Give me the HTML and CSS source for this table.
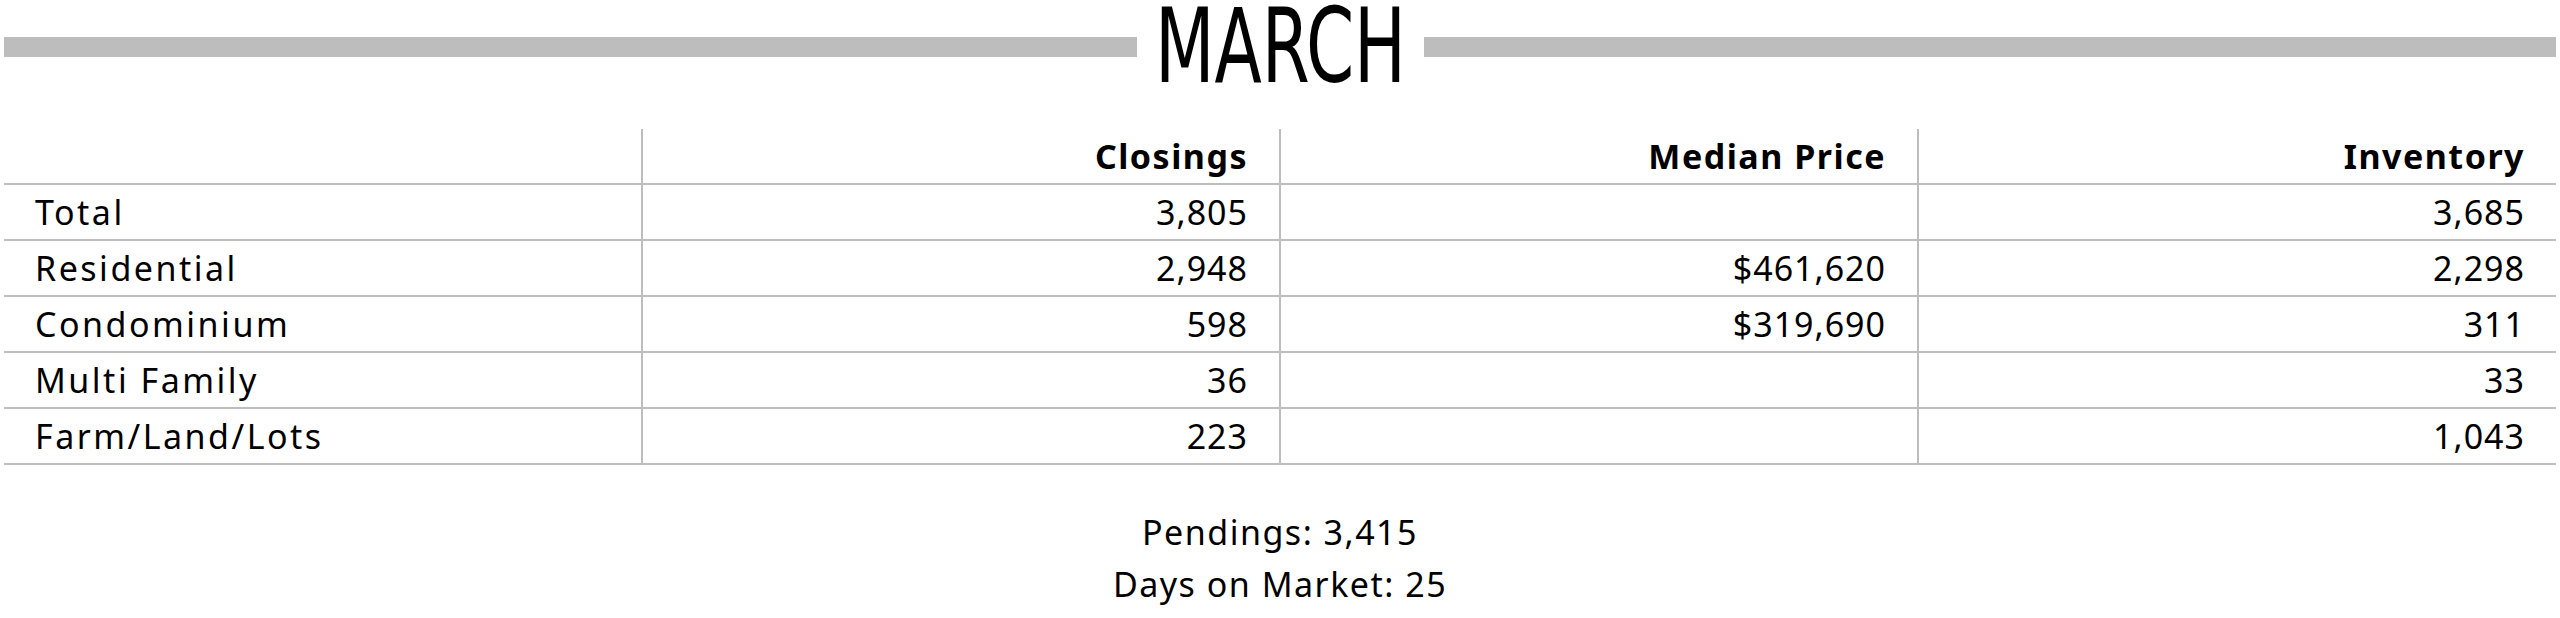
FILE: index.html
```html
<!DOCTYPE html>
<html lang="en">
<head>
<meta charset="utf-8">
<title>March</title>
<link rel="stylesheet" href="styles.css">
</head>
<body>
<div class="report">
  <div class="title-row">
    <div class="bar"></div>
    <h1 class="title">MARCH</h1>
    <div class="bar"></div>
  </div>
  <table class="stats">
    <colgroup><col><col><col><col></colgroup>
    <thead>
      <tr><th></th><th>Closings</th><th>Median Price</th><th>Inventory</th></tr>
    </thead>
    <tbody>
      <tr><td>Total</td><td>3,805</td><td></td><td>3,685</td></tr>
      <tr><td>Residential</td><td>2,948</td><td>$461,620</td><td>2,298</td></tr>
      <tr><td>Condominium</td><td>598</td><td>$319,690</td><td>311</td></tr>
      <tr><td>Multi Family</td><td>36</td><td></td><td>33</td></tr>
      <tr><td>Farm/Land/Lots</td><td>223</td><td></td><td>1,043</td></tr>
    </tbody>
  </table>
  <div class="summary">
    <p>Pendings: 3,415</p>
    <p>Days on Market: 25</p>
  </div>
</div>
</body>
</html>
```
FILE: styles.css
```css
html, body {
  margin: 0;
  padding: 0;
  background: #ffffff;
}
body {
  font-family: "Noto Sans", "Open Sans", sans-serif;
  color: #000000;
}
.report {
  width: 2560px;
}
.title-row {
  display: flex;
  align-items: center;
  gap: 22px;
  padding: 0 4px;
  height: 92px;
}
.bar {
  flex: 1;
  height: 20px;
  background: #bcbdbc;
  margin-top: 2px;
}
.title {
  margin: 0 -47px;
  font-family: "Liberation Sans Narrow", "DejaVu Sans Condensed", sans-serif;
  font-weight: 400;
  font-size: 103px;
  line-height: 1;
  white-space: nowrap;
  transform: scaleX(0.745);
  transform-origin: center;
}
.stats {
  margin: 37px 4px 0;
  width: 2552px;
  border-collapse: collapse;
  table-layout: fixed;
  font-size: 34px;
}
.stats col {
  width: 25%;
}
.stats th,
.stats td {
  text-align: right;
  padding: 0 31px;
  border-bottom: 2px solid #bdbdbd;
  border-left: 2px solid #bdbdbd;
  white-space: nowrap;
  letter-spacing: 1px;
}
.stats th:first-child,
.stats td:first-child {
  border-left: none;
  text-align: left;
}
.stats td:first-child {
  letter-spacing: 2.5px;
}
.stats th {
  height: 54px;
  font-weight: 700;
  letter-spacing: 1.5px;
}
.stats td {
  height: 54px;
}
.summary {
  margin-top: 41px;
  text-align: center;
  font-size: 34px;
  letter-spacing: 1.5px;
}
.summary p {
  margin: 0;
  line-height: 52px;
}
```
